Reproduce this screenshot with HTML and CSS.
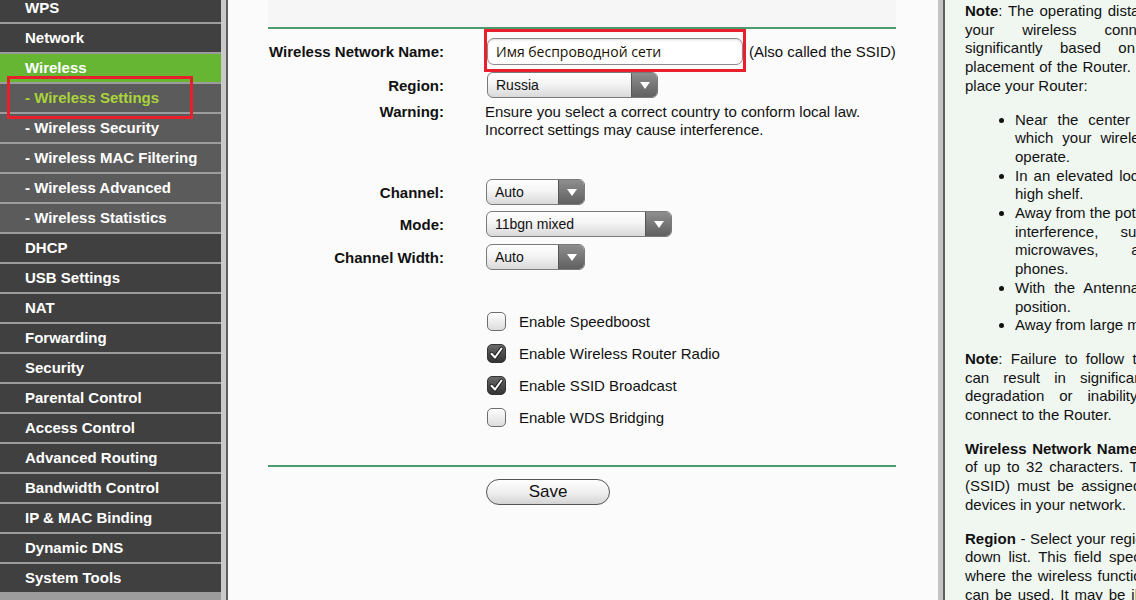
FILE: index.html
```html
<!DOCTYPE html>
<html lang="en">
<head>
    <meta charset="UTF-8">
    <meta name="viewport" content="width=device-width, initial-scale=1.0">
    <title>Wireless Settings</title>
    <link rel="stylesheet" href="styles.css">
</head>
<body>
    <div class="page">
        <div class="sidebar">
            <ul class="menu">
                <li class="menu-item">WPS</li>
                <li class="menu-item">Network</li>
                <li class="menu-item active">Wireless</li>
                <li class="menu-item sub current">- Wireless Settings<span class="mark mark-menu"></span></li>
                <li class="menu-item sub">- Wireless Security</li>
                <li class="menu-item sub">- Wireless MAC Filtering</li>
                <li class="menu-item sub">- Wireless Advanced</li>
                <li class="menu-item sub">- Wireless Statistics</li>
                <li class="menu-item">DHCP</li>
                <li class="menu-item">USB Settings</li>
                <li class="menu-item">NAT</li>
                <li class="menu-item">Forwarding</li>
                <li class="menu-item">Security</li>
                <li class="menu-item">Parental Control</li>
                <li class="menu-item">Access Control</li>
                <li class="menu-item">Advanced Routing</li>
                <li class="menu-item">Bandwidth Control</li>
                <li class="menu-item">IP &amp; MAC Binding</li>
                <li class="menu-item">Dynamic DNS</li>
                <li class="menu-item">System Tools</li>
            </ul>
        </div>

        <div class="main">
            <div class="content">
                <div class="title-bar"></div>

                <div class="row row-name">
                    <div class="label">Wireless Network Name:</div>
                    <div class="field">
                        <div class="input-wrap">
                            <div class="text-input">Имя беспроводной сети</div>
                            <span class="mark mark-input"></span>
                        </div>
                        <span class="hint">(Also called the SSID)</span>
                    </div>
                </div>

                <div class="row row-region">
                    <div class="label">Region:</div>
                    <div class="field">
                        <div class="select select-region"><span class="select-value">Russia</span><span class="select-arrow"></span></div>
                    </div>
                </div>

                <div class="row row-warning">
                    <div class="label">Warning:</div>
                    <div class="field warning-text">Ensure you select a correct country to conform local law.<br>Incorrect settings may cause interference.</div>
                </div>

                <div class="row row-channel">
                    <div class="label">Channel:</div>
                    <div class="field">
                        <div class="select select-small"><span class="select-value">Auto</span><span class="select-arrow"></span></div>
                    </div>
                </div>

                <div class="row row-mode">
                    <div class="label">Mode:</div>
                    <div class="field">
                        <div class="select select-mode"><span class="select-value">11bgn mixed</span><span class="select-arrow"></span></div>
                    </div>
                </div>

                <div class="row row-width">
                    <div class="label">Channel Width:</div>
                    <div class="field">
                        <div class="select select-small"><span class="select-value">Auto</span><span class="select-arrow"></span></div>
                    </div>
                </div>

                <div class="checks">
                    <div class="check-row">
                        <span class="checkbox"></span>
                        <span class="check-label">Enable Speedboost</span>
                    </div>
                    <div class="check-row">
                        <span class="checkbox checked">
                            <svg viewBox="0 0 19 19" width="19" height="19"><path d="M4.5 9.8 L8 13.5 L14.5 4.5" fill="none" stroke="#222" stroke-width="4" stroke-linecap="round" stroke-linejoin="round"/><path d="M4.5 9.8 L8 13.5 L14.5 4.5" fill="none" stroke="#fff" stroke-width="2" stroke-linecap="round" stroke-linejoin="round"/></svg>
                        </span>
                        <span class="check-label">Enable Wireless Router Radio</span>
                    </div>
                    <div class="check-row">
                        <span class="checkbox checked">
                            <svg viewBox="0 0 19 19" width="19" height="19"><path d="M4.5 9.8 L8 13.5 L14.5 4.5" fill="none" stroke="#222" stroke-width="4" stroke-linecap="round" stroke-linejoin="round"/><path d="M4.5 9.8 L8 13.5 L14.5 4.5" fill="none" stroke="#fff" stroke-width="2" stroke-linecap="round" stroke-linejoin="round"/></svg>
                        </span>
                        <span class="check-label">Enable SSID Broadcast</span>
                    </div>
                    <div class="check-row">
                        <span class="checkbox"></span>
                        <span class="check-label">Enable WDS Bridging</span>
                    </div>
                </div>

                <div class="footer">
                    <button class="save-btn">Save</button>
                </div>
            </div>
        </div>

        <div class="help">
            <p><b>Note</b>: The operating distance or range of your wireless connection varies significantly based on the physical placement of the Router. For best results, place your Router:</p>
            <ul>
                <li>Near the center of the area in which your wireless stations will operate.</li>
                <li>In an elevated location such as a high shelf.</li>
                <li>Away from the potential sources of interference, such as PCs, microwaves, and cordless phones.</li>
                <li>With the Antenna in the upright position.</li>
                <li>Away from large metal surfaces.</li>
            </ul>
            <p><b>Note</b>: Failure to follow these guidelines can result in significant performance degradation or inability to wirelessly connect to the Router.</p>
            <p><b>Wireless Network Name</b> - Enter a value of up to 32 characters. The same Name (SSID) must be assigned to all wireless devices in your network.</p>
            <p><b>Region</b> - Select your region from the pull-down list. This field specifies the region where the wireless function of the Router can be used. It may be illegal to use the wireless function of the Router in a region other than one of those specified in this field.</p>
        </div>
    </div>
</body>
</html>
```

FILE: styles.css
```css
*{
    padding: 0;
    margin: 0;
    box-sizing: border-box;
    font-family: "Liberation Sans", Arial, sans-serif;
}
html, body{
    height: 100%;
    overflow: hidden;
}
body{
    background: #fbfbfb;
    color: #111;
}
.page{
    display: flex;
    height: 600px;
    width: 100vw;
    overflow: hidden;
}

/* left menu */
.sidebar{
    flex: 0 0 228px;
    background: #9c9c9c;
    border-right: 2px solid #5e5e5e;
    box-shadow: inset -5px 0 0 #c9c9c9;
    position: relative;
}
.menu{
    list-style: none;
    margin-top: -6px;
    width: 221px;
}
.menu-item{
    position: relative;
    height: 28px;
    margin-bottom: 2px;
    padding-left: 25px;
    line-height: 28px;
    background: #404040;
    color: #fff;
    font-size: 15px;
    font-weight: bold;
    white-space: nowrap;
}
.menu-item.sub{
    background: #5b5b5b;
}
.menu-item.active{
    background: #66b533;
}
.menu-item.current{
    color: #a9d33b;
    z-index: 2;
}

/* red annotation frames */
.mark{
    position: absolute;
    z-index: 2;
    border: 3px solid #e8202e;
    pointer-events: none;
}
.mark-menu{
    left: 7px;
    top: -8px;
    width: 186px;
    height: 43px;
}
.mark-input{
    left: -3px;
    top: -9px;
    width: 262px;
    height: 43px;
}

/* main form */
.main{
    flex: 0 0 710px;
    border-right: 2px solid #5e5e5e;
    box-shadow: inset -5px 0 0 #c4c4c4;
    padding: 0 47px 0 40px;
}
.content{
    width: 628px;
}
.title-bar{
    height: 29px;
    background: #f6f6f6;
    border-bottom: 2px solid #4f9b70;
}
.row{
    display: flex;
    align-items: center;
    font-size: 15px;
}
.label{
    flex: 0 0 176px;
    text-align: right;
    font-weight: bold;
    color: #111;
    margin-right: 42px;
    white-space: nowrap;
}
.field{
    display: flex;
    align-items: center;
}
.row-name{
    margin-top: 9px;
    height: 27px;
}
.row-region{
    margin-top: 7px;
    height: 26px;
}
.row-warning{
    margin-top: 5px;
    align-items: flex-start;
    line-height: 18px;
}
.row-channel{
    margin-top: 40px;
    height: 26px;
}
.row-mode{
    margin-top: 6px;
    height: 26px;
}
.row-width{
    margin-top: 7px;
    height: 26px;
}
.warning-text{
    display: block;
    margin-left: -1px;
    color: #111;
}
.input-wrap{
    position: relative;
    margin-left: 1px;
}
.text-input{
    width: 256px;
    height: 27px;
    border: 1px solid #8a8a8a;
    border-radius: 7px;
    background: #fff;
    box-shadow: inset 0 1px 2px rgba(0,0,0,0.15);
    padding-left: 8px;
    line-height: 25px;
    font-family: "Open Sans", sans-serif;
    font-size: 14px;
    color: #1a1200;
}
.hint{
    margin-left: 6px;
    color: #111;
}

/* dropdowns */
.select{
    display: flex;
    height: 26px;
    border: 1px solid #7a7a7a;
    border-radius: 6px;
    overflow: hidden;
    background: linear-gradient(#ffffff, #f4f4f4 45%, #d9d9d9);
}
.select-value{
    flex: 1;
    padding-left: 8px;
    line-height: 24px;
    font-size: 14px;
    color: #111;
}
.select-arrow{
    flex: 0 0 26px;
    position: relative;
    border-left: 1px solid #555;
    background: linear-gradient(#8e8e8e, #606060);
}
.select-arrow::after{
    content: "";
    position: absolute;
    left: 8px;
    top: 9px;
    border-left: 5px solid transparent;
    border-right: 5px solid transparent;
    border-top: 7px solid #fff;
}
.select-region{
    width: 171px;
    margin-left: 1px;
}
.select-small{
    width: 99px;
}
.select-mode{
    width: 186px;
}

/* checkboxes */
.checks{
    margin-top: 35px;
    padding-left: 218px;
}
.check-row{
    display: flex;
    align-items: center;
    height: 32px;
}
.checkbox{
    width: 19px;
    height: 19px;
    margin-left: 1px;
    border: 1px solid #6e6e6e;
    border-radius: 5px;
    background: linear-gradient(#ffffff, #dcdcdc);
    display: flex;
    align-items: center;
    justify-content: center;
}
.checkbox.checked{
    background: linear-gradient(#6a6a6a, #333333);
    border-color: #333;
}
.checkbox svg{
    display: block;
    flex: 0 0 19px;
}
.check-label{
    margin-left: 13px;
    font-size: 15px;
    color: #111;
}

/* save */
.footer{
    margin-top: 32px;
    border-top: 2px solid #4f9b70;
    padding: 12px 0 0 218px;
}
.save-btn{
    width: 124px;
    height: 26px;
    border: 1px solid #555;
    border-radius: 13px;
    background: linear-gradient(#ffffff, #f0f0f0 50%, #d4d4d4);
    font-size: 17px;
    color: #111;
    font-family: "Liberation Sans", Arial, sans-serif;
}

/* help panel */
.help{
    flex: 0 0 320px;
    background: #f0f7f1;
    padding: 2px 20px 0 20px;
    font-size: 15px;
    line-height: 18.7px;
    color: #111;
}
.help p{
    text-align: justify;
    margin-bottom: 15px;
}
.help ul{
    padding-left: 50px;
    margin-bottom: 15px;
    text-align: justify;
}
```
